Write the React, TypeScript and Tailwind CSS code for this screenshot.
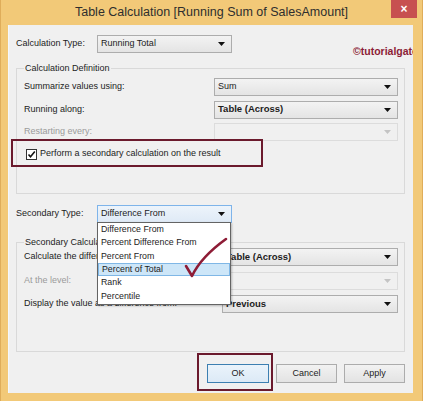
import clsx from 'clsx';

type ComboProps = {
  text?: string;
  bold?: boolean;
  disabled?: boolean;
  focused?: boolean;
  className?: string;
};

function Combo({ text, bold, disabled, focused, className }: ComboProps) {
  return (
    <div
      className={clsx(
        'flex h-[18px] items-center justify-between border pl-[3px] pr-[6px]',
        disabled
          ? 'border-[#dcdcdc] bg-[#f0f0f0]'
          : focused
            ? 'border-[#7eb4ea] bg-gradient-to-b from-[#edf4fb] to-[#dfeaf6]'
            : 'border-[#adadad] bg-gradient-to-b from-[#f3f3f3] to-[#e4e4e4]',
        className,
      )}
    >
      <span className={clsx('whitespace-nowrap', bold && 'text-[9.5px] font-bold')}>{text}</span>
      <svg width="7" height="4" viewBox="0 0 7 4" className="shrink-0">
        <path d="M0 0h7L3.5 4z" fill={disabled ? '#c4c4c4' : '#111'} />
      </svg>
    </div>
  );
}

function Row({ label, disabled, children }: { label: string; disabled?: boolean; children: React.ReactNode }) {
  return (
    <div className="flex h-[18px] items-center justify-between">
      <span className={clsx('whitespace-nowrap', disabled && 'text-[#9b9b9b]')}>{label}</span>
      {children}
    </div>
  );
}

function Button({ label, focused }: { label: string; focused?: boolean }) {
  return (
    <div
      className={clsx(
        'flex h-[19px] items-center justify-center border',
        focused
          ? 'w-[62px] border-[#3c7fb1] bg-gradient-to-b from-[#eaf3fb] to-[#dceaf6]'
          : 'w-[61px] border-[#acacac] bg-gradient-to-b from-[#f2f2f2] to-[#e3e3e3]',
      )}
    >
      {label}
    </div>
  );
}

const listItems = [
  'Difference From',
  'Percent Difference From',
  'Percent From',
  'Percent of Total',
  'Rank',
  'Percentile',
];

export default function App() {
  return (
    <div className="flex h-[401px] w-[423px] flex-col border-x border-[#dfad5a] bg-[#f2c978] font-['Liberation_Sans',Arial,sans-serif] text-[9px] text-[#1c1c1c]">
      {/* Title bar */}
      <div className="relative flex h-[25px] shrink-0 items-center justify-center">
        <span className="text-[12.5px] text-[#2e2e2e]">Table Calculation [Running Sum of SalesAmount]</span>
        <div className="absolute right-[5px] top-0 flex h-[18px] w-[26px] items-center justify-center bg-[#c75050] text-[12px] font-bold text-white">
          ×
        </div>
      </div>

      {/* Client area */}
      <div className="relative ml-[7px] mr-[9px] flex h-[368px] flex-col overflow-hidden border-l border-[#f4f8fc] bg-[#f0f0f0] pl-[7px] pr-[8px] pt-[10px]">
        <div className="flex h-[18px] items-center">
          <span className="w-[81px]">Calculation Type:</span>
          <Combo text="Running Total" className="w-[135px]" />
        </div>

        <fieldset className="mt-[9px] h-[132px] border border-[#d9d9d9] pl-[7px] pr-[6px]">
          <legend className="px-[1px] leading-[12px]">Calculation Definition</legend>
          <div className="mt-[4px] flex flex-col gap-[4.5px]">
            <Row label="Summarize values using:">
              <Combo text="Sum" className="w-[184px]" />
            </Row>
            <Row label="Running along:">
              <Combo text="Table (Across)" bold className="w-[184px]" />
            </Row>
            <Row label="Restarting every:" disabled>
              <Combo disabled className="w-[184px]" />
            </Row>
          </div>
          <div className="mt-[7px] flex h-[12px] items-center gap-[3px] pl-[2px]">
            <div className="flex h-[11px] w-[11px] items-center justify-center border border-[#333] bg-white">
              <svg width="9" height="9" viewBox="0 0 9 9">
                <path d="M1.5 4.5l2 2.3L7.8 1.6" fill="none" stroke="#111" strokeWidth="1.6" />
              </svg>
            </div>
            <span>Perform a secondary calculation on the result</span>
          </div>
        </fieldset>

        <div className="mt-[11px] flex h-[18px] items-center">
          <span className="w-[81px]">Secondary Type:</span>
          <Combo text="Difference From" focused className="w-[135px]" />
        </div>

        <fieldset className="mt-[13px] h-[116px] border border-[#d9d9d9] pl-[7px] pr-[6px]">
          <legend className="px-[1px] leading-[12px]">Secondary Calculation Definition</legend>
          <div className="flex flex-col gap-[5.5px]">
            <Row label="Calculate the difference along:">
              <Combo text="Table (Across)" bold className="w-[176px]" />
            </Row>
            <Row label="At the level:" disabled>
              <Combo disabled className="w-[176px]" />
            </Row>
            <Row label="Display the value as a difference from:">
              <Combo text="Previous" bold className="w-[176px]" />
            </Row>
          </div>
        </fieldset>

        <div className="mt-[12px] flex justify-end gap-[7px]">
          <Button label="OK" focused />
          <Button label="Cancel" />
          <Button label="Apply" />
        </div>

        {/* Watermark */}
        <span className="absolute left-[344px] top-[19px] whitespace-nowrap text-[10.5px] font-bold text-[#8c1d36]">
          ©tutorialgateway
        </span>

        {/* Open dropdown list */}
        <div className="absolute left-[88px] top-[197px] flex w-[134px] flex-col border border-[#646464] bg-white pb-[1px] shadow-[1px_1px_2px_rgba(0,0,0,0.25)]">
          {listItems.map((item) => (
            <div
              key={item}
              className={clsx(
                'flex h-[13.3px] items-center pl-[3px] text-[8.8px]',
                item === 'Percent of Total' && 'border border-[#7fb7e6] bg-[#cde6f8] pl-[2px]',
              )}
            >
              {item}
            </div>
          ))}
        </div>

        {/* Annotations */}
        <div className="absolute left-[2px] top-[114px] h-[28px] w-[252px] border-2 border-[#6b1a2d]" />
        <div className="absolute left-[188px] top-[328px] h-[38px] w-[76px] border-2 border-[#6b1a2d]" />
        <svg className="absolute left-[170px] top-[208px]" width="60" height="50" viewBox="0 0 60 50">
          <path
            d="M7 33 Q10 38 13 43 Q22 24 47 6"
            fill="none"
            stroke="#8e1c36"
            strokeWidth="2.6"
            strokeLinecap="round"
            strokeLinejoin="round"
          />
        </svg>
      </div>
    </div>
  );
}
